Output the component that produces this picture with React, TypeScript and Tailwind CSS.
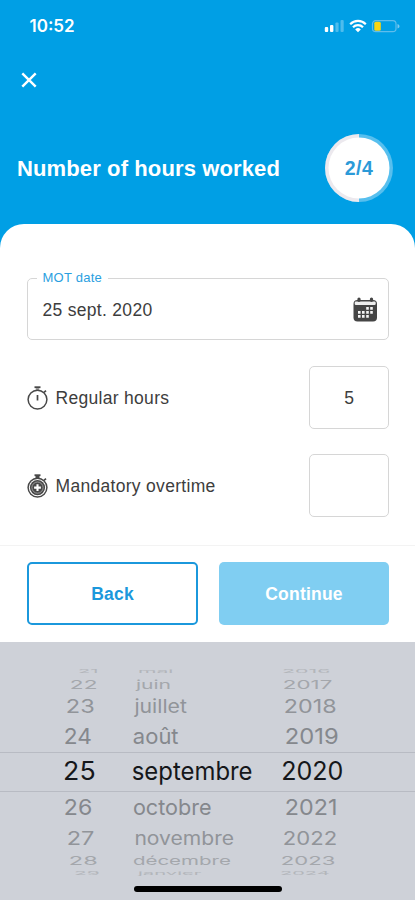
import { useLayoutEffect, useRef, useState } from "react";

type Cell = { text: string; x: number; width: number };
type Row = { height: number; drop: number; scaleY: number; tone: string; day: Cell; month: Cell; year: Cell };

const c = (text: string, x: number, width: number): Cell => ({ text, x, width });

const rows: Row[] = [
  { height: 11, drop: 0, scaleY: 0.2, tone: "text-[#b3b6bb]", day: c("21", 79, 18), month: c("mai", 139, 33), year: c("2016", 283, 46) },
  { height: 18, drop: -0.5, scaleY: 0.5, tone: "text-[#a4a7ac]", day: c("22", 71, 25), month: c("juin", 137, 33), year: c("2017", 284, 47) },
  { height: 26, drop: -0.5, scaleY: 0.77, tone: "text-[#919499]", day: c("23", 67, 26), month: c("juillet", 135.5, 50), year: c("2018", 285, 50) },
  { height: 32, drop: 1, scaleY: 0.91, tone: "text-[#85888d]", day: c("24", 65, 26), month: c("août", 134, 43.5), year: c("2019", 286, 51) },
  { height: 40, drop: 0, scaleY: 1.04, tone: "text-[#15171a]", day: c("25", 64.5, 29.5), month: c("septembre", 133, 118), year: c("2020", 282.5, 60) },
  { height: 32, drop: -0.5, scaleY: 0.91, tone: "text-[#85888d]", day: c("26", 65, 26.5), month: c("octobre", 134, 76), year: c("2021", 286, 50) },
  { height: 28, drop: 0.5, scaleY: 0.77, tone: "text-[#919499]", day: c("27", 68, 25), month: c("novembre", 135.5, 97), year: c("2022", 284, 52) },
  { height: 18, drop: 0, scaleY: 0.5, tone: "text-[#a4a7ac]", day: c("28", 70, 26), month: c("décembre", 134, 96), year: c("2023", 282, 52) },
  { height: 8, drop: -0.5, scaleY: 0.2, tone: "text-[#b3b6bb]", day: c("29", 75, 24), month: c("janvier", 139, 61), year: c("2024", 281, 48) },
];

function WheelText({ cell, base, row }: { cell: Cell; base: number; row: Row }) {
  const ref = useRef<HTMLSpanElement>(null);
  const [natural, setNatural] = useState(0);
  useLayoutEffect(() => {
    if (ref.current) setNatural(ref.current.offsetWidth - 2.5);
  }, []);
  const scaleX = natural > 0 ? cell.width / natural : 1;
  return (
    <span
      ref={ref}
      className="inline-block origin-left justify-self-start whitespace-nowrap"
      style={{
        transform: `translate(${cell.x - base - 1.25 * scaleX}px, ${row.drop}px) scale(${scaleX}, ${row.scaleY})`,
      }}
    >
      {cell.text}
    </span>
  );
}

function Wheel() {
  return (
    <section className="h-[258px] bg-[#ced1d8] pt-[23px] font-['Inter','Liberation_Sans',sans-serif] text-[24px] leading-[30px]">
      {rows.map((row, i) => (
        <div
          key={row.day.text}
          className={`grid grid-cols-[68px_150px_auto] grid-rows-1 items-center pl-16 ${row.tone} ${i === 4 ? "border-y-[1.5px] border-[#b8bbc3]" : ""}`}
          style={{ height: row.height }}
        >
          <WheelText cell={row.day} base={64} row={row} />
          <WheelText cell={row.month} base={132} row={row} />
          <WheelText cell={row.year} base={282} row={row} />
        </div>
      ))}
      <div className="ml-[134px] mt-[8px] h-[5.5px] w-[148px] rounded-full bg-black" />
    </section>
  );
}

function StatusIcons() {
  return (
    <svg className="h-4 w-[76px]" viewBox="0 0 76 16" fill="none">
      <g fill="#fff">
        <rect x="0.8" y="9" width="3.4" height="5" rx="1" />
        <rect x="6" y="7" width="3.4" height="7" rx="1" />
        <rect x="11.4" y="4.5" width="3.2" height="9.5" rx="1" opacity="0.3" />
        <rect x="16.5" y="2" width="3.2" height="12" rx="1" opacity="0.3" />
      </g>
      <g stroke="#fff" strokeWidth="2.2">
        <path d="M26.2 6.2a11 11 0 0 1 15.6 0" />
        <path d="M29 9.3a7 7 0 0 1 10 0" />
      </g>
      <path d="M31.2 11.4a4 4 0 0 1 5.6 0L34 14.3Z" fill="#fff" />
      <rect x="48.5" y="2.7" width="23.5" height="11" rx="3.2" stroke="#5fbdec" strokeWidth="1.2" />
      <path d="M73.5 6v4.5c1.5-.6 2-1.3 2-2.2s-.5-1.700-2-2.300Z" fill="#7fcaf0" />
      <rect x="50.3" y="3.700" width="6.500" height="9" rx="1.500" fill="#fdd50f" />
    </svg>
  );
}

function CalendarIcon() {
  return (
    <svg className="h-[25px] w-6" viewBox="0 0 24 25" fill="none">
      <rect x="0.500" y="3" width="23.500" height="21.500" rx="4" fill="#454545" />
      <rect x="1.700" y="4.500" width="21" height="3.500" rx="1.200" fill="#eee" />
      <path d="M6 3.300V2M18.500 3.300V2" stroke="#454545" strokeWidth="3.200" strokeLinecap="round" />
      <path
        d="M13.200 10h2.600v2.800h-2.600zM17.200 10h2.600v2.800h-2.600zM5 14h2.600v2.800H5zM9 14h2.600v2.800H9zM13.200 14h2.600v2.800h-2.600zM17.200 14h2.600v2.800h-2.600zM5 18h2.600v2.800H5zM9 18h2.600v2.800H9zM13.200 18h2.600v2.800h-2.600z"
        fill="#f4f4f4"
      />
    </svg>
  );
}

function StopwatchIcon({ overtime = false }: { overtime?: boolean }) {
  return (
    <svg className="h-6 w-[21px]" viewBox="0 0 21 24" fill="none" stroke="#484848">
      <path d="M7.500 1.200h6" strokeWidth="1.800" />
      <path d="M10.500 2v2.500" strokeWidth={overtime ? 4 : 3.500} stroke={overtime ? "#484848" : "#999"} />
      <path d="m17 6.400 2-1.800" strokeWidth="1.700" />
      <circle cx="10.500" cy="13.600" r="9.400" strokeWidth="1.500" />
      {overtime ? (
        <>
          <circle cx="10.500" cy="13.600" r="7.600" fill="#484848" stroke="none" />
          <circle cx="10.500" cy="13.600" r="5.600" strokeWidth="0.900" stroke="#a3a3a3" />
          <path d="M10.500 10.200v6.800M7.100 13.600h6.800" strokeWidth="2.100" stroke="#fff" />
        </>
      ) : (
        <path d="M10.500 9v5.500" strokeWidth="1.700" />
      )}
    </svg>
  );
}

function HoursRow({ label, value, overtime }: { label: string; value: string; overtime?: boolean }) {
  return (
    <div className="flex h-[63px] items-center">
      <StopwatchIcon overtime={overtime} />
      <span className="ml-[8px] flex-1 pt-px tracking-[0.3px]">{label}</span>
      <div className="flex h-[63px] w-[80px] items-center justify-center rounded-[5px] border-[1.5px] border-[#d6d6d6] pt-px">
        {value}
      </div>
    </div>
  );
}

export default function App() {
  return (
    <main className="flex h-[900px] w-[415px] flex-col overflow-hidden bg-[#009fe5] font-['Liberation_Sans',Arial,sans-serif] text-[17.5px] text-[#3d3d3d]">
      <header className="h-[224px] text-white">
        <div className="flex h-[52px] items-center justify-between pl-[29.500px] pr-[15px]">
          <span className="pt-[2px] font-['Inter',sans-serif] text-[17px] font-semibold">10:52</span>
          <StatusIcons />
        </div>
        <div className="pl-[21px] pt-5">
          <svg className="size-4" viewBox="0 0 16 16" stroke="#fff" strokeWidth="2.400">
            <path d="m1.300 1.300 13.400 13.400M14.700 1.300 1.300 14.700" />
          </svg>
        </div>
        <div className="mt-[46px] flex items-center justify-between pl-[17px] pr-[22px]">
          <h1 className="text-[22px] font-bold tracking-[0.120px]">Number of hours worked</h1>
          <div className="grid size-[68px] place-items-center">
            <svg className="col-start-1 row-start-1 size-[68px]" viewBox="0 0 68 68">
              <circle cx="34" cy="34" r="34" fill="#57bfee" />
              <path d="M34 0a34 34 0 0 0 0 68Z" fill="#ece9ee" />
              <circle cx="34" cy="34" r="30.500" fill="#fff" />
            </svg>
            <span className="col-start-1 row-start-1 pt-px text-[19.500px] font-bold tracking-[0.500px] text-[#2b9ad8]">2/4</span>
          </div>
        </div>
      </header>

      <section className="h-[418px] rounded-t-[24px] bg-white">
        <div className="h-[321px] pl-[26.500px] pr-[26px] pt-[44px]">
          <fieldset className="h-[72px] rounded-[5px] border-[1.5px] border-[#d6d6d6] pl-[9px] pr-[11px]">
            <legend className="px-[6px] text-[13px] leading-5 tracking-[0.250px] text-[#2b9fdf]">MOT date</legend>
            <div className="flex h-[43px] items-center justify-between pl-[6px]">
              <span className="pt-px tracking-[0.300px]">25 sept. 2020</span>
              <CalendarIcon />
            </div>
          </fieldset>
          <div className="mt-[26px] flex flex-col gap-[25px]">
            <HoursRow label="Regular hours" value="5" />
            <HoursRow label="Mandatory overtime" value="" overtime />
          </div>
        </div>
        <div className="flex h-[97px] gap-[21px] border-t border-[#f3f3f3] pl-[27px] pr-[26px] pt-4 font-bold tracking-[0.200px]">
          <button className="h-[63px] w-[171px] rounded-[5px] border-2 border-[#1b98dc] pt-px text-[#1b98dc]">Back</button>
          <button className="h-[63px] w-[170px] rounded-[5px] bg-[#80cef2] pt-px text-white">Continue</button>
        </div>
      </section>

      <Wheel />
    </main>
  );
}
